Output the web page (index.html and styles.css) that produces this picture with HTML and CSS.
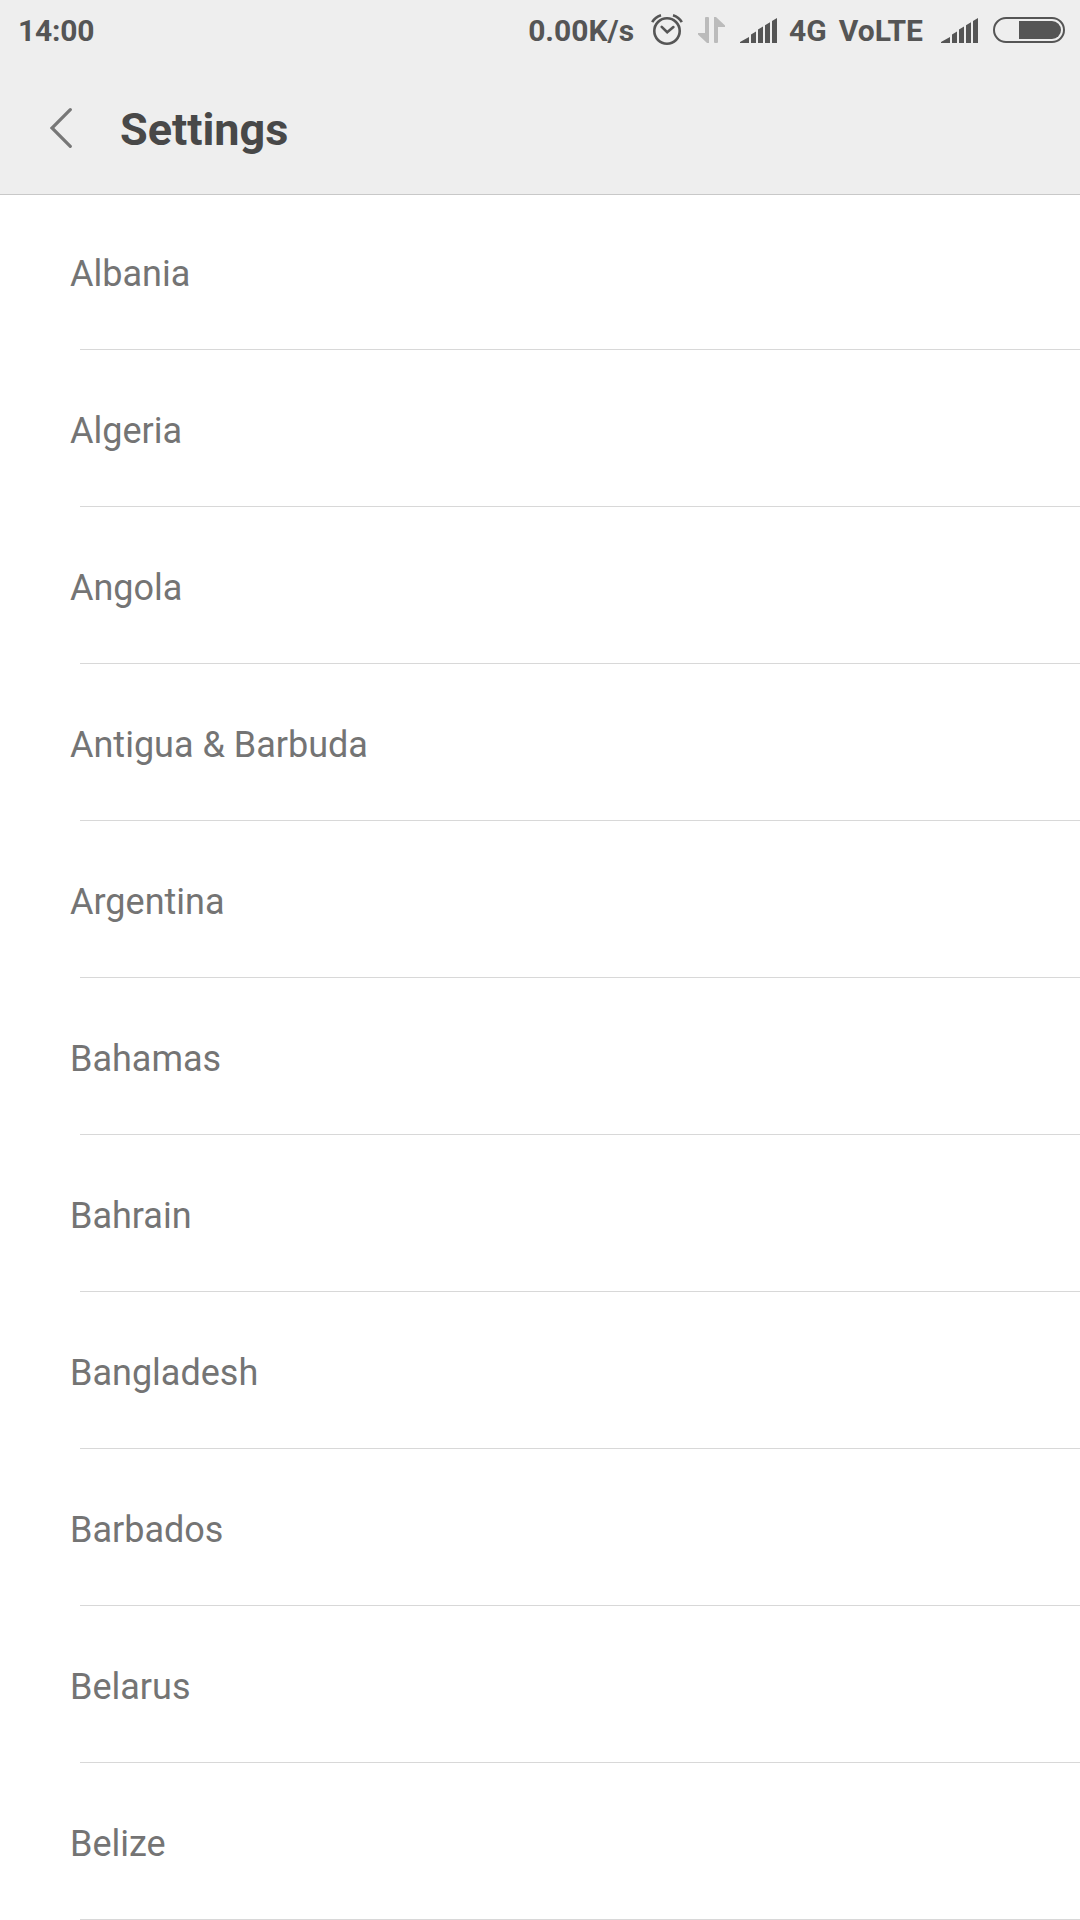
FILE: index.html
```html
<!DOCTYPE html>
<html lang="en">
<head>
<meta charset="utf-8">
<title>Settings</title>
<link rel="stylesheet" href="styles.css">
</head>
<body>
<header class="header">
  <div class="status">
    <span class="time">14:00</span>
    <span class="speed">0.00K/s</span>
    <svg class="alarm" width="32" height="34" viewBox="0 0 32 34" fill="none" stroke="#555" stroke-width="2.6"><circle cx="16" cy="18" r="12.7"/><path d="M10.7 13.9l5.5 5.4 6.2-5.2" stroke-linecap="round"/><path d="M1.2 9.2Q4 4 10 2.2M30.8 9.2Q28 4 22 2.2"/></svg>
    <svg class="data" width="27" height="26" viewBox="0 0 27 26" fill="#bbb"><path d="M7 1q0-1 1-1h2q1 0 1 1v25H9L0 17.4V16h7zM16 0h2l9 8.6V10h-7v15q0 1-1 1h-2q-1 0-1-1z"/></svg>
    <svg class="signal" width="37" height="26" viewBox="0 0 37 26" fill="#555"><path d="M0 25l9-5v6H0zM11 17.5l5-3V26h-5zM18 12.5l5-3V26h-5zM25 8.3l5-3V26h-5zM32 4l5-3v25h-5z"/></svg>
    <span class="network">4G</span>
    <span class="volte">VoLTE</span>
    <svg class="signal second" width="37" height="26" viewBox="0 0 37 26" fill="#555"><path d="M0 25l9-5v6H0zM11 17.5l5-3V26h-5zM18 12.5l5-3V26h-5zM25 8.3l5-3V26h-5zM32 4l5-3v25h-5z"/></svg>
    <svg class="battery" width="72" height="26" viewBox="0 0 72 26"><rect x="1" y="1" width="70" height="24" rx="12" fill="none" stroke="#555" stroke-width="2"/><path d="M26 4h33a9 9 0 0 1 0 18H26z" fill="#555"/></svg>
  </div>
  <div class="title-bar">
    <svg class="back" width="22" height="40" viewBox="0 0 22 40" fill="none" stroke="#777" stroke-width="3.2" stroke-linecap="round"><path d="M20.3 1.7L2 20l18.3 18.3"/></svg>
    <h1 class="title">Settings</h1>
  </div>
</header>
<ul class="list">
  <li class="item">Albania</li>
  <li class="item">Algeria</li>
  <li class="item">Angola</li>
  <li class="item">Antigua &amp; Barbuda</li>
  <li class="item">Argentina</li>
  <li class="item">Bahamas</li>
  <li class="item">Bahrain</li>
  <li class="item">Bangladesh</li>
  <li class="item">Barbados</li>
  <li class="item">Belarus</li>
  <li class="item">Belize</li>
</ul>
</body>
</html>
```
FILE: styles.css
```css
* { box-sizing: border-box; }
body { margin: 0; height: 1920px; overflow: hidden; background: #fff; font-family: Roboto, sans-serif; }
.header { height: 195px; background: #eee; border-bottom: 1px solid #c8c8c8; }
.status { display: flex; align-items: center; height: 60px; padding: 0 15px 0 18px; color: #555; font-size: 30px; font-weight: 700; }
.status svg { flex: none; }
.time { margin-right: auto; letter-spacing: -0.2px; }
.alarm { margin-left: 17px; }
.data, .signal { margin-left: 15px; }
.network, .volte { margin-left: 12px; }
.second { margin-left: 18px; }
.battery { margin-left: 15px; }
.title-bar { display: flex; align-items: center; height: 134px; padding: 2px 0 0 50px; }
.title { margin: 2px 0 0 48px; font-size: 45px; color: #484848; }
.list { margin: 0; padding: 0; list-style: none; }
.item { display: flex; align-items: center; height: 157px; padding: 4px 0 0 70px; font-size: 36px; color: #747474; background: linear-gradient(#d8d8d8, #d8d8d8) 80px 100% / 1000px 1px no-repeat; }
.item:first-child { height: 155px; padding-top: 2px; }
```
